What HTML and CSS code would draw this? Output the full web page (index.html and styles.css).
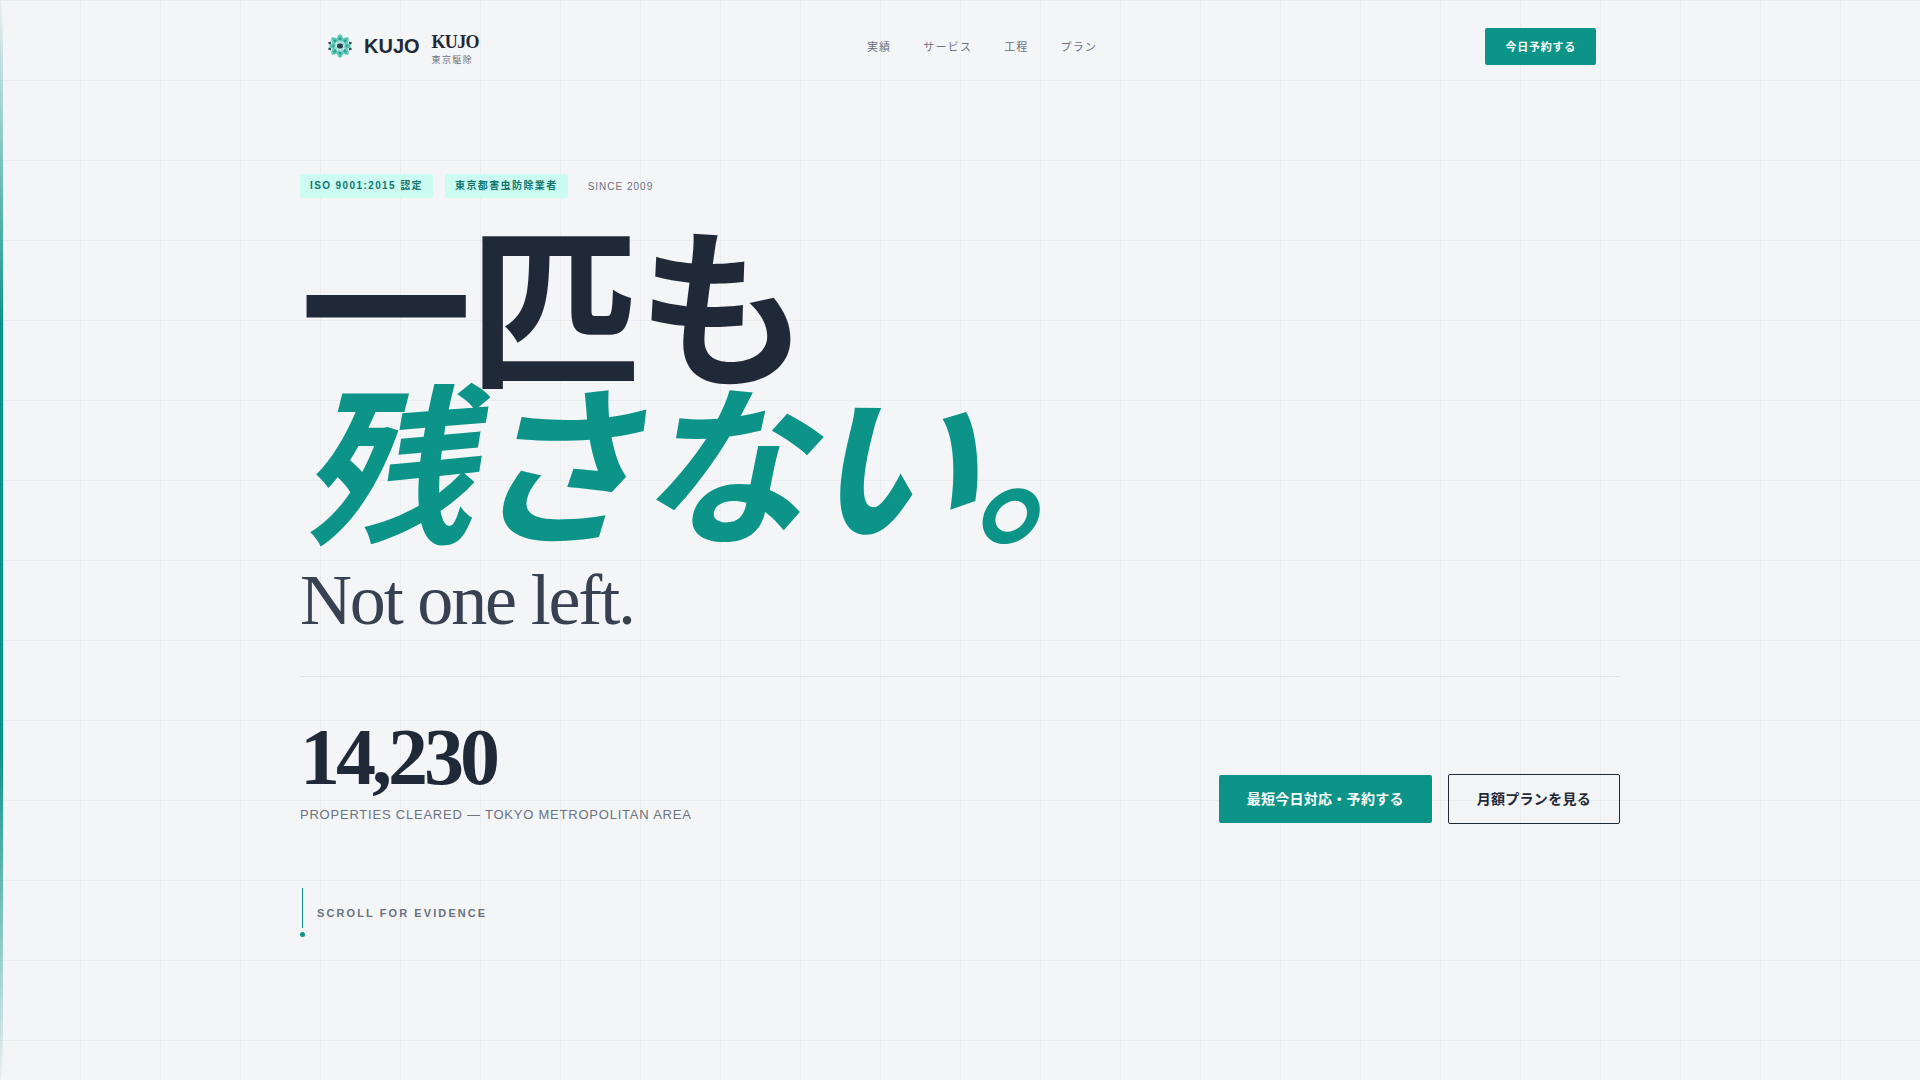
FILE: index.html
```html
<!DOCTYPE html>
<html lang="ja">
<head>
<meta charset="utf-8">
<meta name="viewport" content="width=device-width, initial-scale=1">
<title>KUJO 東京駆除</title>
<link rel="stylesheet" href="styles.css">
</head>
<body>
<header class="nav">
  <a class="brand" href="#top">
    <svg class="brand-mark" viewBox="0 0 48 52" aria-hidden="true">
      <defs>
        <g id="petal">
          <path d="M24 20 L17 11 L20 3 L24 0 L28 3 L31 11 Z" fill="#5cc7b6"/>
          <path d="M24 15 L21 10 L24 5 L27 10 Z" fill="#2f9c92"/>
        </g>
      </defs>
      <g transform="translate(0 2)">
        <g fill="#26535c">
          <path id="wedge" d="M0 17 L6 15 L6 20 L2 21 Z"/>
          <use href="#wedge" transform="matrix(-1 0 0 1 48 0)"/>
          <use href="#wedge" transform="matrix(1 0 0 -1 0 48)"/>
          <use href="#wedge" transform="rotate(180 24 24)"/>
        </g>
        <use href="#petal"/>
        <use href="#petal" transform="rotate(45 24 24)"/>
        <use href="#petal" transform="translate(-2 0) rotate(90 24 24)"/>
        <use href="#petal" transform="rotate(135 24 24)"/>
        <use href="#petal" transform="rotate(180 24 24)"/>
        <use href="#petal" transform="rotate(225 24 24)"/>
        <use href="#petal" transform="translate(2 0) rotate(270 24 24)"/>
        <use href="#petal" transform="rotate(315 24 24)"/>
        <circle cx="24" cy="24" r="11" fill="#c3f0e8"/>
        <circle cx="24" cy="24" r="9" fill="none" stroke="#5cc7b6" stroke-width="2" stroke-dasharray="4 3"/>
        <rect x="18" y="19" width="12" height="10" rx="4" fill="#2b4450"/>
      </g>
    </svg>
    <span class="brand-name">KUJO</span>
    <span class="brand-stack">
      <span class="brand-serif">KUJO</span>
      <span class="brand-sub">東京駆除</span>
    </span>
  </a>
  <nav class="nav-links">
    <a href="#results">実績</a>
    <a href="#services">サービス</a>
    <a href="#process">工程</a>
    <a href="#plans">プラン</a>
  </nav>
  <button class="btn btn-small" type="button">今日予約する</button>
</header>
<main class="hero" id="top">
  <div class="badges">
    <span class="badge">ISO 9001:2015 認定</span>
    <span class="badge">東京都害虫防除業者</span>
    <span class="since">SINCE 2009</span>
  </div>
  <h1 class="title">
    <span class="title-line">一匹も</span>
    <em class="title-line title-accent">残さない。</em>
    <span class="title-en">Not one left.</span>
  </h1>
  <div class="summary">
    <div class="stat">
      <p class="stat-value">14,230</p>
      <p class="stat-label">PROPERTIES CLEARED — TOKYO METROPOLITAN AREA</p>
    </div>
    <div class="actions">
      <button class="btn btn-large" type="button">最短今日対応・予約する</button>
      <button class="btn btn-large btn-outline" type="button">月額プランを見る</button>
    </div>
  </div>
  <a class="scroll" href="#results">
    <span class="scroll-mark"></span>
    <span>SCROLL FOR EVIDENCE</span>
  </a>
</main>
</body>
</html>
```
FILE: styles.css
```css
*, *::before, *::after { box-sizing: border-box; }

:root {
  --ink: #1f2937;
  --slate: #374151;
  --muted: #6b7280;
  --teal: #0d9488;
  --mint: #ccfbf1;
  --sans: "Liberation Sans", "Noto Sans CJK JP", sans-serif;
  --serif: "Liberation Serif", serif;
}

body {
  margin: 0;
  min-height: 100vh;
  color: var(--ink);
  font-family: var(--sans);
  background-color: #f3f5f7;
  background-image:
    linear-gradient(rgba(31, 41, 55, 0.04) 1px, transparent 1px),
    linear-gradient(90deg, rgba(31, 41, 55, 0.04) 1px, transparent 1px);
  background-size: 80px 80px;
}

body::before {
  content: "";
  position: fixed;
  inset: 0 auto 0 0;
  width: 3px;
  background: linear-gradient(to bottom, transparent, var(--teal) 30%, var(--teal) 70%, transparent);
}

a { color: inherit; text-decoration: none; }
p, h1 { margin: 0; }

.nav {
  display: flex;
  justify-content: space-between;
  align-items: center;
  max-width: 1320px;
  margin: 0 auto;
  padding: 25px 24px 0 28px;
}

.brand { display: flex; align-items: center; gap: 12px; }
.brand-mark { width: 24px; height: 26px; }
.brand-name { font-size: 20px; font-weight: 700; line-height: 24px; }
.brand-stack { display: flex; flex-direction: column; padding-top: 6px; }
.brand-serif {
  font-family: var(--serif);
  font-size: 18px;
  font-weight: 700;
  line-height: 22px;
  letter-spacing: -0.04em;
}
.brand-sub { color: var(--muted); font-size: 9px; line-height: 14px; letter-spacing: 0.15em; }

.nav-links {
  display: flex;
  gap: 32px;
  color: var(--muted);
  font-size: 11px;
  letter-spacing: 0.11em;
}

.btn {
  border: 0;
  border-radius: 2px;
  background: var(--teal);
  color: #fff;
  font-family: inherit;
  font-weight: 700;
  cursor: pointer;
}
.btn-small { height: 37px; padding: 0 20px; font-size: 11px; letter-spacing: 0.07em; }
.btn-large { height: 48px; padding: 0 28px 2px; font-size: 14px; letter-spacing: 0.02em; }
.btn-outline {
  height: 50px;
  border: 1px solid var(--ink);
  background: transparent;
  color: var(--ink);
}

.hero {
  max-width: 1320px;
  margin: 0 auto;
  padding: 107px 0 80px;
}

.badges { display: flex; align-items: center; gap: 12px; font-size: 10px; }
.badge {
  padding: 0 10px;
  border-radius: 2px;
  background: var(--mint);
  color: #0f766e;
  font-weight: 700;
  line-height: 24px;
  letter-spacing: 0.14em;
}
.since { margin-left: 8px; color: var(--muted); letter-spacing: 0.1em; }

.title { margin-top: 36px; font-size: 172px; line-height: 158px; }
.title-line { display: block; letter-spacing: -0.02em; white-space: nowrap; }
.title-accent { color: var(--teal); }
.title-en {
  display: block;
  margin-top: 14px;
  color: var(--slate);
  font-family: var(--serif);
  font-size: 72px;
  font-weight: 400;
  line-height: 72px;
  letter-spacing: -0.03em;
}

.summary {
  display: flex;
  justify-content: space-between;
  align-items: flex-end;
  margin-top: 40px;
  padding-top: 40px;
  border-top: 1px solid #dfe2e6;
}
.stat-value {
  font-family: var(--serif);
  font-size: 80px;
  font-weight: 700;
  line-height: 80px;
  letter-spacing: -0.05em;
}
.stat-label { margin-top: 9px; color: var(--muted); font-size: 13px; line-height: 18px; letter-spacing: 0.06em; }
.actions { display: flex; align-items: center; gap: 16px; }

.scroll {
  display: inline-flex;
  align-items: center;
  gap: 12px;
  margin-top: 64px;
  color: var(--muted);
  font-size: 11px;
  font-weight: 700;
  letter-spacing: 0.19em;
}
.scroll-mark {
  display: flex;
  flex-direction: column;
  align-items: center;
  gap: 4px;
  width: 5px;
}
.scroll-mark::before { content: ""; width: 1px; height: 40px; background: var(--teal); }
.scroll-mark::after { content: ""; width: 5px; height: 5px; border-radius: 50%; background: var(--teal); }
```
